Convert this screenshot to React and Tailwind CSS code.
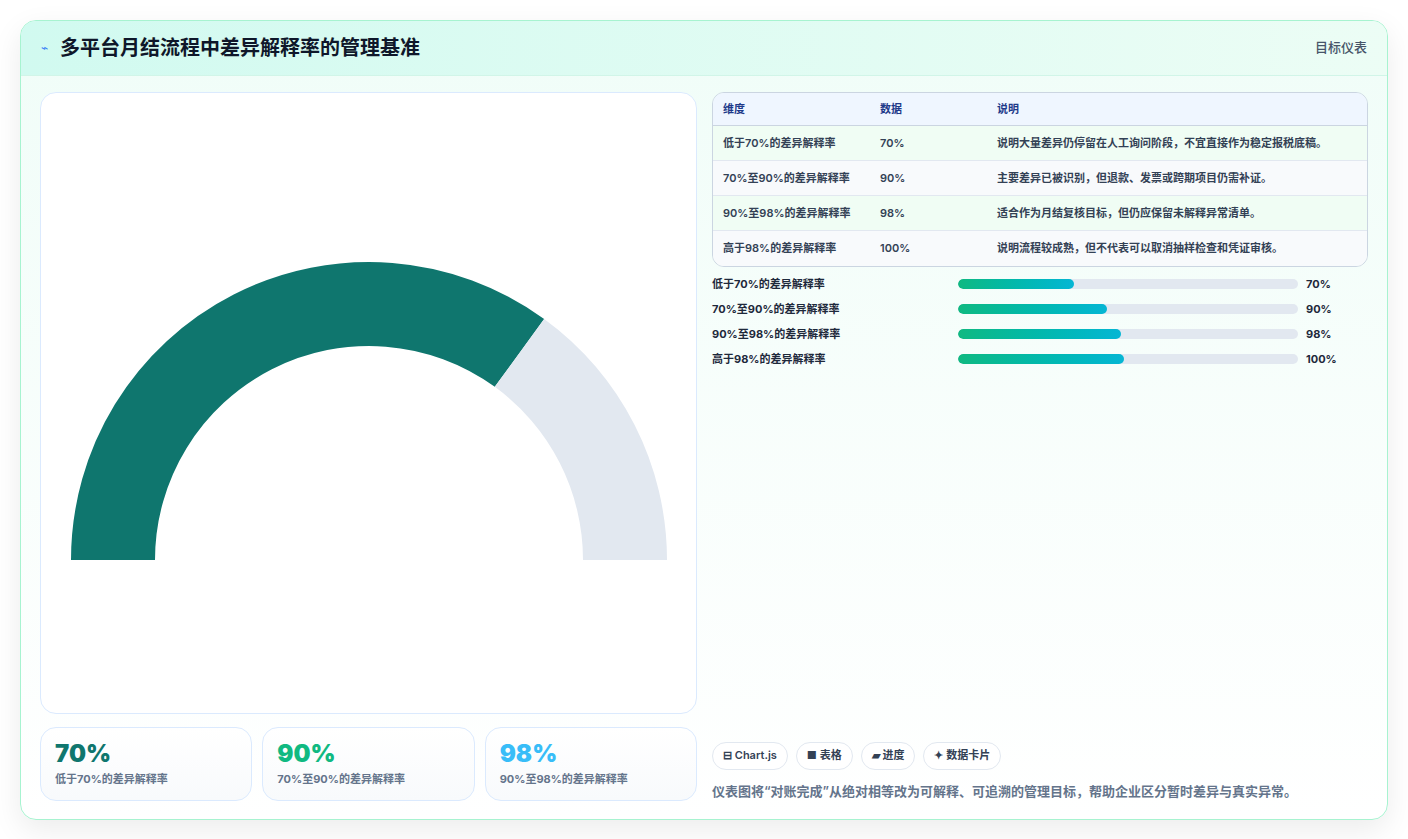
import React from "react";

const rows = [
  ["低于70%的差异解释率", "70%", "说明大量差异仍停留在人工询问阶段，不宜直接作为稳定报税底稿。"],
  ["70%至90%的差异解释率", "90%", "主要差异已被识别，但退款、发票或跨期项目仍需补证。"],
  ["90%至98%的差异解释率", "98%", "适合作为月结复核目标，但仍应保留未解释异常清单。"],
  ["高于98%的差异解释率", "100%", "说明流程较成熟，但不代表可以取消抽样检查和凭证审核。"],
];
const bars = [116, 149, 163, 166];

function Gauge() {
  const cx = 368, cy = 560, R = 298, r = 214;
  const a = (126 * Math.PI) / 180;
  const ox = cx - R * Math.cos(a), oy = cy - R * Math.sin(a);
  const ix = cx - r * Math.cos(a), iy = cy - r * Math.sin(a);
  return (
    <svg width="656" height="620" viewBox="40 93 656 620" className="block">
      <path d={`M${cx - R} ${cy} A${R} ${R} 0 0 1 ${ox} ${oy} L${ix} ${iy} A${r} ${r} 0 0 0 ${cx - r} ${cy} Z`} fill="#0f766e" />
      <path d={`M${ox} ${oy} A${R} ${R} 0 0 1 ${cx + R} ${cy} L${cx + r} ${cy} A${r} ${r} 0 0 0 ${ix} ${iy} Z`} fill="#e2e8f0" />
    </svg>
  );
}

export default function App() {
  return (
    <div className="min-h-screen bg-white p-5" style={{ fontFamily: "Inter, 'Noto Sans CJK SC', sans-serif" }}>
      <div className="rounded-2xl border border-[#a7f3d0] bg-gradient-to-b from-[#f0fdf8] to-white shadow-[0_10px_30px_rgba(0,0,0,0.08)] overflow-hidden">
        <div className="h-[55px] flex items-center justify-between px-5 bg-gradient-to-r from-[#d1faf0] to-[#ecfdf5] border-b border-[#d1f5e8]">
          <div className="flex items-center gap-3">
            <span className="text-[#3b82f6] text-xs">⌁</span>
            <h1 className="text-[20px] font-bold text-[#0f172a]">多平台月结流程中差异解释率的管理基准</h1>
          </div>
          <span className="text-[13px] font-medium text-[#475569]">目标仪表</span>
        </div>
        <div className="flex gap-[15px] px-[19px] pt-4 pb-[18px]">
          <div className="w-[657px] flex flex-col gap-[13px]">
            <div className="h-[622px] bg-white rounded-2xl border border-[#dbeafe] overflow-hidden">
              <Gauge />
            </div>
            <div className="grid grid-cols-3 gap-[10px]">
              {[["70%", "text-[#0f766e]", "低于70%的差异解释率"], ["90%", "text-[#10b981]", "70%至90%的差异解释率"], ["98%", "text-[#38bdf8]", "90%至98%的差异解释率"]].map(([v, c, l]) => (
                <div key={v} className="h-[74px] rounded-2xl border border-[#dbeafe] bg-gradient-to-b from-white to-[#f8fafc] px-[14px] pt-[12px]">
                  <div className={`text-[24px] font-black leading-7 ${c}`}>{v}</div>
                  <div className="text-[11px] font-bold text-[#64748b] mt-[3px]">{l}</div>
                </div>
              ))}
            </div>
          </div>
          <div className="flex-1 flex flex-col">
            <div className="rounded-xl border border-[#cbd5e1] overflow-hidden text-[11px] font-semibold text-[#334155]">
              <div className="flex h-[33px] items-center bg-[#eff6ff] border-b border-[#cbd5e1] font-bold text-[#1e3a8a]">
                <div className="w-[167px] pl-[10px]">维度</div>
                <div className="w-[117px]">数据</div>
                <div>说明</div>
              </div>
              {rows.map((r, i) => (
                <div key={i} className={`flex h-[35px] items-center ${i % 2 ? "bg-[#f8fafc]" : "bg-[#f0fdf4]"} ${i < 3 ? "border-b border-[#e2e8f0]" : ""}`}>
                  <div className="w-[167px] pl-[10px]">{r[0]}</div>
                  <div className="w-[117px]">{r[1]}</div>
                  <div>{r[2]}</div>
                </div>
              ))}
            </div>
            <div className="mt-[10px] flex flex-col gap-[11px]">
              {rows.map((r, i) => (
                <div key={i} className="flex items-center h-[14px] text-[11px] font-bold text-[#1e293b]">
                  <div className="w-[246px]">{r[0]}</div>
                  <div className="w-[340px] h-[10px] rounded-full bg-[#e2e8f0] overflow-hidden">
                    <div className="h-full rounded-full bg-gradient-to-r from-[#10b981] to-[#06b6d4]" style={{ width: bars[i] }} />
                  </div>
                  <div className="ml-2">{r[1]}</div>
                </div>
              ))}
            </div>
            <div className="mt-auto flex gap-2 text-[11px] font-semibold text-[#334155]">
              {["⊟ Chart.js", "■ 表格", "▰ 进度", "✦ 数据卡片"].map((t) => (
                <span key={t} className="h-[28px] px-[10px] flex items-center rounded-full border border-[#e2e8f0] bg-white">{t}</span>
              ))}
            </div>
            <p className="mt-[12px] text-[13px] font-semibold text-[#64748b]">仪表图将“对账完成”从绝对相等改为可解释、可追溯的管理目标，帮助企业区分暂时差异与真实异常。</p>
          </div>
        </div>
      </div>
    </div>
  );
}
